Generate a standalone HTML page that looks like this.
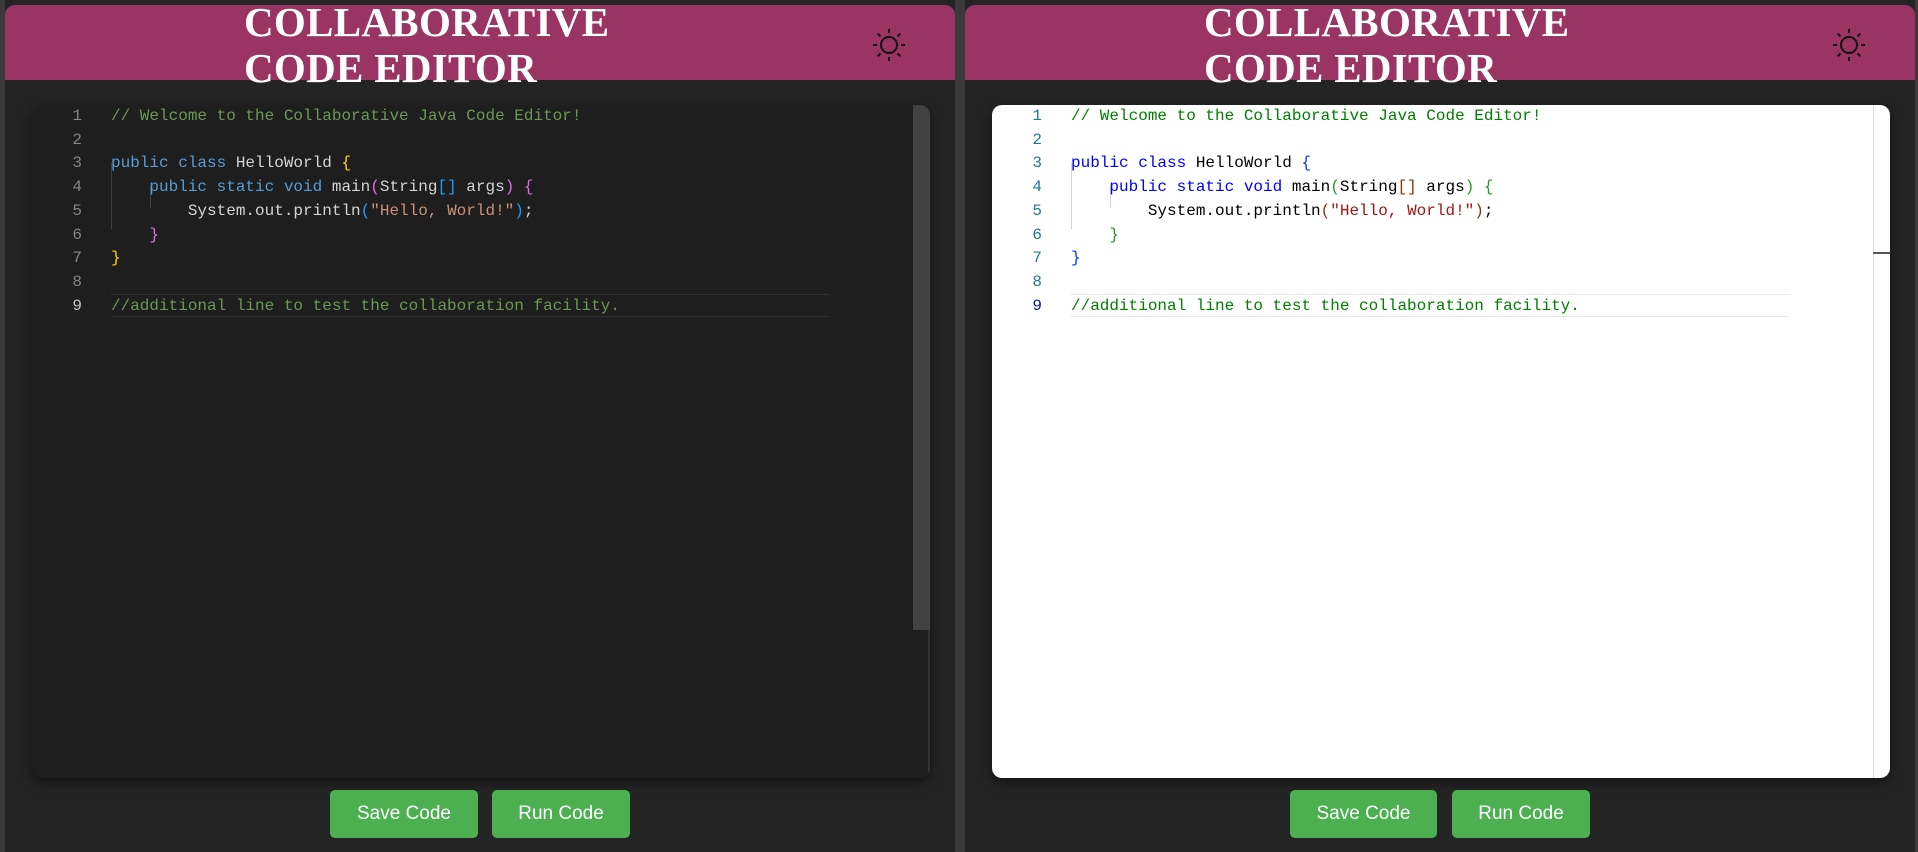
<!DOCTYPE html>
<html><head><meta charset="utf-8"><style>
*{margin:0;padding:0;box-sizing:border-box}
body{width:1918px;height:852px;background:#3a3a3a;overflow:hidden;position:relative;font-family:"Liberation Sans",sans-serif}
.panel{position:absolute;top:0;width:950px;height:852px;background:#242424}
.hdr{position:absolute;left:0;top:5px;width:100%;height:75px;background:#993463;border-radius:10px 10px 0 0}
.title{position:absolute;left:239px;top:-6px;color:#fff;font:bold 41px/46px "Liberation Serif",serif;letter-spacing:0.3px;white-space:nowrap;transform:scaleX(1.0)}
.sun{position:absolute;top:22px;width:36px;height:36px}
.ed{position:absolute;left:27px;top:105px;width:898px;height:673px;border-radius:10px;box-shadow:0 4px 12px rgba(0,0,0,.5);overflow:hidden}
.code{position:absolute;left:0;top:105px;font:16px/23.7px "Liberation Mono",monospace;white-space:pre}
.ln{position:absolute;width:50px;text-align:right}
.btn{position:absolute;top:790px;height:48px;background:#4caf50;color:#fff;border-radius:5px;font-size:19px;line-height:48px;text-align:center}
</style></head><body>
<div class="panel" style="left:5px">
 <div class="hdr"><div class="title">COLLABORATIVE<br>CODE EDITOR</div>
 <svg class="sun" style="left:866px" viewBox="0 0 36 36" stroke="#111" stroke-width="2" fill="none"><circle cx="18" cy="18" r="8"/><path d="M18 2v4M18 30v4M2 18h4M30 18h4M6.7 6.7l2.8 2.8M26.5 26.5l2.8 2.8M6.7 29.3l2.8-2.8M26.5 9.5l2.8-2.8"/></svg></div>
 <div class="ed" style="background:#1e1e1e">
  <div style="position:absolute;right:0;top:0;width:17px;height:525px;background:#424242"></div>
  <div style="position:absolute;right:0;top:525px;width:2px;height:148px;background:#333"></div>
  <div style="position:absolute;left:79px;top:189px;width:718px;height:23px;border-top:1px solid #303030;border-bottom:1px solid #303030"></div>
  <div style="position:absolute;left:79px;top:58px;width:1px;height:66px;background:#404040"></div>
  <div style="position:absolute;left:118px;top:81px;width:1px;height:22px;background:#404040"></div>
 </div>
 <div style="position:absolute;left:0;top:0">
 <div class="code" style="left:27px;color:#858585"><div class="ln" style="left:0">1<br>2<br>3<br>4<br>5<br>6<br>7<br>8<br><span style="color:#c6c6c6">9</span></div></div>
 <div class="code" style="left:106px;color:#d4d4d4"><span style="color:#6a9955">// Welcome to the Collaborative Java Code Editor!</span>

<span style="color:#569cd6">public class</span> HelloWorld <span style="color:#ffd700">{</span>
    <span style="color:#569cd6">public static void</span> main<span style="color:#da70d6">(</span>String<span style="color:#179fff">[]</span> args<span style="color:#da70d6">)</span> <span style="color:#da70d6">{</span>
        System.out.println<span style="color:#179fff">(</span><span style="color:#ce9178">"Hello, World!"</span><span style="color:#179fff">)</span>;
    <span style="color:#da70d6">}</span>
<span style="color:#ffd700">}</span>

<span style="color:#6a9955">//additional line to test the collaboration facility.</span></div>
 </div>
 <div class="btn" style="left:325px;width:148px">Save Code</div>
 <div class="btn" style="left:487px;width:138px">Run Code</div>
</div>
<div class="panel" style="left:965px">
 <div class="hdr"><div class="title">COLLABORATIVE<br>CODE EDITOR</div>
 <svg class="sun" style="left:866px" viewBox="0 0 36 36" stroke="#111" stroke-width="2" fill="none"><circle cx="18" cy="18" r="8"/><path d="M18 2v4M18 30v4M2 18h4M30 18h4M6.7 6.7l2.8 2.8M26.5 26.5l2.8 2.8M6.7 29.3l2.8-2.8M26.5 9.5l2.8-2.8"/></svg></div>
 <div class="ed" style="background:#fff">
  <div style="position:absolute;right:16px;top:0;width:1px;height:673px;background:#ddd"></div>
  <div style="position:absolute;right:0;top:147px;width:17px;height:2px;background:#555"></div>
  <div style="position:absolute;left:79px;top:189px;width:718px;height:23px;border-top:1px solid #e8e8e8;border-bottom:1px solid #e8e8e8"></div>
  <div style="position:absolute;left:79px;top:58px;width:1px;height:66px;background:#d3d3d3"></div>
  <div style="position:absolute;left:118px;top:81px;width:1px;height:22px;background:#d3d3d3"></div>
 </div>
 <div style="position:absolute;left:0;top:0">
 <div class="code" style="left:27px;color:#237893"><div class="ln" style="left:0">1<br>2<br>3<br>4<br>5<br>6<br>7<br>8<br><span style="color:#0b216f">9</span></div></div>
 <div class="code" style="left:106px;color:#000"><span style="color:#008000">// Welcome to the Collaborative Java Code Editor!</span>

<span style="color:#0000ff">public class</span> HelloWorld <span style="color:#0431fa">{</span>
    <span style="color:#0000ff">public static void</span> main<span style="color:#319331">(</span>String<span style="color:#7b3814">[]</span> args<span style="color:#319331">)</span> <span style="color:#319331">{</span>
        System.out.println<span style="color:#7b3814">(</span><span style="color:#a31515">"Hello, World!"</span><span style="color:#7b3814">)</span>;
    <span style="color:#319331">}</span>
<span style="color:#0431fa">}</span>

<span style="color:#008000">//additional line to test the collaboration facility.</span></div>
 </div>
 <div class="btn" style="left:325px;width:147px">Save Code</div>
 <div class="btn" style="left:487px;width:138px">Run Code</div>
</div>
</body></html>
